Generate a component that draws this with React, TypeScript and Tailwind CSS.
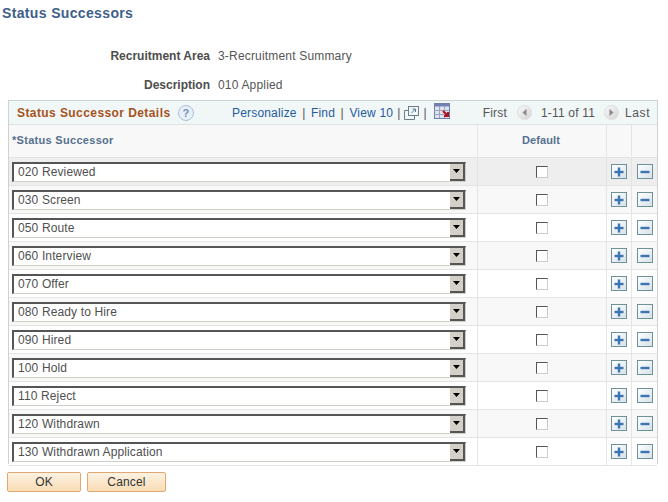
const rows = [
  "020 Reviewed",
  "030 Screen",
  "050 Route",
  "060 Interview",
  "070 Offer",
  "080 Ready to Hire",
  "090 Hired",
  "100 Hold",
  "110 Reject",
  "120 Withdrawn",
  "130 Withdrawn Application",
];

function SmallButton({ kind }: { kind: "add" | "remove" }) {
  return (
    <div className="w-[16px] h-[15px] border border-[#6f9198] bg-gradient-to-br from-white to-[#d5e3e8] flex items-center justify-center">
      <svg width="10" height="10" viewBox="0 0 10 10">
        <rect x="0.5" y="3.8" width="9" height="2.4" fill="#3d74b3" />
        {kind === "add" && <rect x="3.8" y="0.5" width="2.4" height="9" fill="#3d74b3" />}
      </svg>
    </div>
  );
}

function SelectBox({ label }: { label: string }) {
  return (
    <div className="h-[20px] w-[454px] flex border-t-2 border-l-2 border-[#555] border-r border-b border-r-[#d0cfc8] border-b-[#d0cfc8] bg-white">
      <div className="flex-1 pl-[4px] text-[12px] tracking-[0.13px] leading-[16px] text-[#505050]">{label}</div>
      <div className="w-[15px] h-[17px] bg-[#d4d0c8] border-r-2 border-b-2 border-[#555] flex items-center justify-center">
        <svg width="7" height="4" viewBox="0 0 7 4">
          <polygon points="0,0 7,0 3.5,4" fill="#000" />
        </svg>
      </div>
    </div>
  );
}

function PagerArrow({ dir }: { dir: "left" | "right" }) {
  return (
    <div className="w-[15px] h-[15px] rounded-full bg-gradient-to-br from-[#f8f8f8] to-[#d6d6d6] border border-[#dedede] flex items-center justify-center">
      <svg width="5" height="7" viewBox="0 0 5 7">
        <polygon points={dir === "left" ? "4.5,0 4.5,7 0.5,3.5" : "0.5,0 0.5,7 4.5,3.5"} fill="#8a8a8a" />
      </svg>
    </div>
  );
}

function Sep({ wide }: { wide?: boolean }) {
  return <span className={`text-[#555] ${wide ? "mx-[5.5px]" : "mx-[4px]"}`}>|</span>;
}

export default function App() {
  return (
    <div className="w-[668px] h-[502px] bg-white overflow-hidden font-['Liberation_Sans',Arial,sans-serif] text-[12px] tracking-[0.18px]">
      <div className="pl-[2px] pt-[5px] h-[46px] text-[14px] leading-[16px] font-bold tracking-[0.35px] text-[#3e5f8a]">
        Status Successors
      </div>

      <div className="flex items-center h-[18px] mt-[1px]">
        <div className="w-[210px] text-right font-bold text-[#4d4d4d] tracking-normal">Recruitment Area</div>
        <div className="ml-[8px] text-[#555]">3-Recruitment Summary</div>
      </div>
      <div className="flex items-center h-[18px] mt-[11px]">
        <div className="w-[210px] text-right font-bold text-[#4d4d4d] tracking-normal">Description</div>
        <div className="ml-[8px] text-[#555]">010 Applied</div>
      </div>

      <div className="ml-[8px] mt-[6px] w-[650px] h-[364px] border-t border-l border-r border-[#cbd3d6] border-b-0">
        <div className="h-[24px] bg-[#f1f6f7] border-b border-[#dfe3e4] flex items-center">
          <div className="ml-[8px] text-[12px] font-bold tracking-[0.42px] text-[#a5531c] w-[161px]">
            Status Successor Details
          </div>
          <div className="w-[16px] h-[16px] rounded-full border border-[#a9c1dc] bg-[#e9f0f7] text-[11px] leading-[14px] text-center font-bold text-[#6f93bd]">
            ?
          </div>
          <div className="ml-[38px] flex items-center text-[#1f5c9e]">
            <span>Personalize</span>
            <Sep wide />
            <span>Find</span>
            <Sep wide />
            <span>View 10</span>
            <Sep />
            <svg width="15" height="14" viewBox="0 0 15 14" fill="none" stroke="#6d7d8a">
              <rect x="4.5" y="0.5" width="10" height="9" />
              <path d="M0.5 4.5h4M0.5 4.5v9h10v-4" />
              <path d="M7.5 7l4-4M8.5 3h3v3" stroke="#5a7a99" />
            </svg>
            <Sep />
            <svg width="16" height="16" viewBox="0 0 16 16" className="ml-[3px] mb-[3px]">
              <rect x="0.5" y="0.5" width="15" height="15" fill="#dfe3ef" stroke="#6f7fa8" strokeWidth="1" />
              <rect x="0.5" y="0.5" width="15" height="3" fill="#7280b4" />
              <path d="M5.5 3v12M10.5 3v12M0 7.5h15M0 11.5h15" stroke="#9aa5bf" strokeWidth="1" />
              <path d="M9 8l5 5M14 9v4h-4" stroke="#b3121d" strokeWidth="2" fill="none" />
            </svg>
          </div>
          <div className="ml-[33px] flex items-center text-[#555]">
            <span>First</span>
            <div className="ml-[10px]"><PagerArrow dir="left" /></div>
            <span className="ml-[9px]">1-11 of 11</span>
            <div className="ml-[9px]"><PagerArrow dir="right" /></div>
            <span className="ml-[6px] tracking-[0.6px]">Last</span>
          </div>
        </div>

        <div className="flex h-[33px] pb-[1px] bg-[#f8f8f8] border-b border-[#e4e4e4] text-[11px] font-bold tracking-[0.3px] text-[#55708f]">
          <div className="w-[469px] pl-[3px] flex items-center border-r border-[#e4e4e4]">*Status Successor</div>
          <div className="w-[129px] pr-[2px] tracking-[0.1px] flex items-center justify-center border-r border-[#e4e4e4]">Default</div>
          <div className="w-[25px] border-r border-[#e4e4e4]" />
          <div className="flex-1" />
        </div>

        {rows.map((label, i) => (
          <div
            key={label}
            className={`flex h-[28px] border-b border-[#e4e4e4] ${i === 0 ? "bg-[#eeeeee]" : i % 2 === 0 ? "bg-white" : "bg-[#f8f8f8]"}`}
          >
            <div className="w-[469px] pl-[3px] flex items-center border-r border-[#e4e4e4]">
              <SelectBox label={label} />
            </div>
            <div className="w-[129px] flex items-center justify-center border-r border-[#e4e4e4]">
              <div className="w-[12px] h-[12px] bg-white border border-t-[#555] border-l-[#555] border-r-[#ccc] border-b-[#ccc]" />
            </div>
            <div className="w-[25px] flex items-center justify-center border-r border-[#e4e4e4]">
              <SmallButton kind="add" />
            </div>
            <div className="flex-1 flex items-center justify-center">
              <SmallButton kind="remove" />
            </div>
          </div>
        ))}
      </div>

      <div className="flex ml-[7px] mt-[8px] gap-[6px]">
        <div className="w-[74px] h-[20px] rounded-[2px] border border-[#e0a873] bg-gradient-to-b from-[#fdf2e2] to-[#f9dcb4] text-center leading-[18px] text-[#333]">
          OK
        </div>
        <div className="w-[79px] h-[20px] rounded-[2px] border border-[#e0a873] bg-gradient-to-b from-[#fdf2e2] to-[#f9dcb4] text-center leading-[18px] text-[#333]">
          Cancel
        </div>
      </div>
    </div>
  );
}
